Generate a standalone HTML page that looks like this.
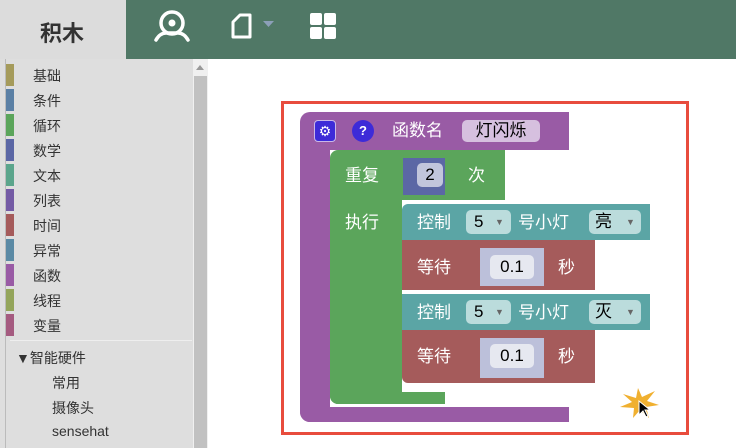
<html><head><style>
body{margin:0;width:736px;height:448px;position:relative;overflow:hidden;background:#fff;font-family:"Liberation Sans","Noto Sans CJK SC",sans-serif}
.a{position:absolute}
.cat{position:absolute;left:33px;font-size:14px;color:#333}
.bar{position:absolute;left:6px;width:8px;height:22px}
.w{color:#fff;font-size:17px;position:absolute;line-height:22px;margin-top:2px}
.f{position:absolute;background:#bbdcdc;border-radius:5px;height:24px;font-size:17px;color:#000;line-height:24px}
.in{position:absolute;background:#e6e8f0;border-radius:5px;height:24px;font-size:17px;color:#000;text-align:center;line-height:24px}
</style></head><body>
<div class="a" style="left:0;top:0;width:126px;height:59px;background:#dcdcdc"></div>
<div class="a" style="left:40px;top:16px;font-size:22px;font-weight:bold;color:#333">积木</div>
<div class="a" style="left:126px;top:0;width:610px;height:59px;background:#507866"></div>
<svg class="a" style="left:152px;top:8px" width="40" height="36" viewBox="0 0 40 36"><circle cx="20" cy="15" r="11" fill="none" stroke="#fff" stroke-width="3.5"/><circle cx="20" cy="15" r="3.5" fill="#fff"/><path d="M4 32 Q8 25 14 25 H26 Q32 25 36 32" fill="none" stroke="#fff" stroke-width="3.5" stroke-linecap="round"/></svg>
<svg class="a" style="left:230px;top:12px" width="50" height="28"><path d="M3 10 L10 3 H20 V25 H3 Z" fill="none" stroke="#fff" stroke-width="3" stroke-linejoin="round"/><path d="M33 9 H44 L38.5 15 Z" fill="#8c9fb8"/></svg>
<svg class="a" style="left:310px;top:13px" width="28" height="28"><rect x="0" y="0" width="12" height="12" rx="2" fill="#fff"/><rect x="14" y="0" width="12" height="12" rx="2" fill="#fff"/><rect x="0" y="14" width="12" height="12" rx="2" fill="#fff"/><rect x="14" y="14" width="12" height="12" rx="2" fill="#fff"/></svg>
<div class="a" style="left:0;top:59px;width:193px;height:389px;background:#dedede"></div>
<div class="a" style="left:5px;top:59px;width:1px;height:389px;background:#bbb"></div>
<div class="a" style="left:193px;top:59px;width:15px;height:389px;background:#f0f0f0"></div>
<div class="a" style="left:194px;top:76px;width:13px;height:372px;background:#c1c1c1"></div>
<div class="a" style="left:196px;top:65px;width:0;height:0;border:4px solid transparent;border-bottom:5px solid #999;border-top:0"></div>
<div class="bar" style="top:64px;background:#a59b5b"></div><div class="cat" style="top:66px">基础</div>
<div class="bar" style="top:89px;background:#5b80a5"></div><div class="cat" style="top:91px">条件</div>
<div class="bar" style="top:114px;background:#5ba55b"></div><div class="cat" style="top:116px">循环</div>
<div class="bar" style="top:139px;background:#5b67a5"></div><div class="cat" style="top:141px">数学</div>
<div class="bar" style="top:164px;background:#5ba58c"></div><div class="cat" style="top:166px">文本</div>
<div class="bar" style="top:189px;background:#745ba5"></div><div class="cat" style="top:191px">列表</div>
<div class="bar" style="top:214px;background:#a55b5b"></div><div class="cat" style="top:216px">时间</div>
<div class="bar" style="top:239px;background:#5b8aa5"></div><div class="cat" style="top:241px">异常</div>
<div class="bar" style="top:264px;background:#995ba5"></div><div class="cat" style="top:266px">函数</div>
<div class="bar" style="top:289px;background:#94a55b"></div><div class="cat" style="top:291px">线程</div>
<div class="bar" style="top:314px;background:#a55b80"></div><div class="cat" style="top:316px">变量</div>
<div class="a" style="left:10px;top:340px;width:182px;height:1px;background:#eee"></div>
<div class="cat" style="left:16px;top:348px">▼智能硬件</div>
<div class="cat" style="left:52px;top:373px">常用</div>
<div class="cat" style="left:52px;top:398px">摄像头</div>
<div class="cat" style="left:52px;top:423px">sensehat</div>
<div class="a" style="left:281px;top:101px;width:402px;height:328px;border:3px solid #e84c3d"></div>
<div class="a" style="left:300px;top:112px;width:269px;height:38px;background:#995ba5;border-radius:10px 0 0 0"></div>
<div class="a" style="left:300px;top:148px;width:30px;height:274px;background:#995ba5;border-radius:0 0 0 10px"></div>
<div class="a" style="left:300px;top:407px;width:269px;height:15px;background:#995ba5;border-radius:0 0 0 10px"></div>
<div class="a" style="left:314px;top:120px;width:22px;height:22px;background:#3d2bd8;border-radius:4px;border:1px solid #c9b7e8;box-sizing:border-box;color:#fff;font-size:14px;text-align:center;line-height:20px">⚙</div>
<div class="a" style="left:352px;top:120px;width:22px;height:22px;background:#3d2bd8;border-radius:50%;color:#fff;font-size:13px;font-weight:bold;text-align:center;line-height:22px">?</div>
<div class="w" style="left:392px;top:118px">函数名</div>
<div class="a" style="left:462px;top:120px;width:78px;height:22px;background:#d6c0df;border-radius:5px;font-size:17px;text-align:center;line-height:22px">灯闪烁</div>
<div class="a" style="left:330px;top:150px;width:175px;height:50px;background:#5ba55b;border-radius:8px 0 0 0"></div>
<div class="a" style="left:330px;top:195px;width:72px;height:209px;background:#5ba55b;border-radius:0 0 0 8px"></div>
<div class="a" style="left:330px;top:392px;width:115px;height:12px;background:#5ba55b;border-radius:0 0 0 8px"></div>
<div class="w" style="left:345px;top:163px">重复</div>
<div class="w" style="left:345px;top:210px">执行</div>
<div class="w" style="left:468px;top:163px">次</div>
<div class="a" style="left:403px;top:158px;width:42px;height:37px;background:#5b67a5"></div>
<div class="in" style="left:417px;top:163px;width:26px;background:#c1c5dc">2</div>
<div class="a" style="left:402px;top:204px;width:248px;height:36px;background:#5ba5a5;border-radius:6px 0 0 0"></div>
<div class="w" style="left:417px;top:210px">控制</div>
<div class="f" style="left:466px;top:210px;width:45px"><span style="position:absolute;left:8px;top:0">5</span><span style="position:absolute;left:29px;top:0;font-size:9px;color:#666">▼</span></div>
<div class="w" style="left:518px;top:210px">号小灯</div>
<div class="f" style="left:589px;top:210px;width:52px"><span style="position:absolute;left:6px;top:0">亮</span><span style="position:absolute;left:37px;top:0;font-size:9px;color:#666">▼</span></div>
<div class="a" style="left:402px;top:240px;width:193px;height:50px;background:#a55b5b"></div>
<div class="w" style="left:417px;top:255px">等待</div>
<div class="a" style="left:480px;top:248px;width:64px;height:38px;background:#bcc0da"></div>
<div class="in" style="left:490px;top:255px;width:44px">0.1</div>
<div class="w" style="left:558px;top:255px">秒</div>
<div class="a" style="left:402px;top:294px;width:248px;height:36px;background:#5ba5a5"></div>
<div class="w" style="left:417px;top:300px">控制</div>
<div class="f" style="left:466px;top:300px;width:45px"><span style="position:absolute;left:8px;top:0">5</span><span style="position:absolute;left:29px;top:0;font-size:9px;color:#666">▼</span></div>
<div class="w" style="left:518px;top:300px">号小灯</div>
<div class="f" style="left:589px;top:300px;width:52px"><span style="position:absolute;left:6px;top:0">灭</span><span style="position:absolute;left:37px;top:0;font-size:9px;color:#666">▼</span></div>
<div class="a" style="left:402px;top:330px;width:193px;height:53px;background:#a55b5b;border-radius:0 0 0 6px"></div>
<div class="w" style="left:417px;top:344px">等待</div>
<div class="a" style="left:480px;top:338px;width:64px;height:40px;background:#bcc0da"></div>
<div class="in" style="left:490px;top:344px;width:44px">0.1</div>
<div class="w" style="left:558px;top:344px">秒</div>
<svg class="a" style="left:615px;top:385px" width="50" height="36"><path d="M23 3 L27 12 L40 6 L32 16 L44 20 L31 22 L34 33 L25 25 L18 33 L19 23 L5 22 L17 17 L8 9 L21 13 Z" fill="#f0b030"/><path d="M24 16 L24 30 L28 26 L31 32 L33 31 L30 25 L35 25 Z" fill="#000" stroke="#fff" stroke-width="1"/></svg>
</body></html>
